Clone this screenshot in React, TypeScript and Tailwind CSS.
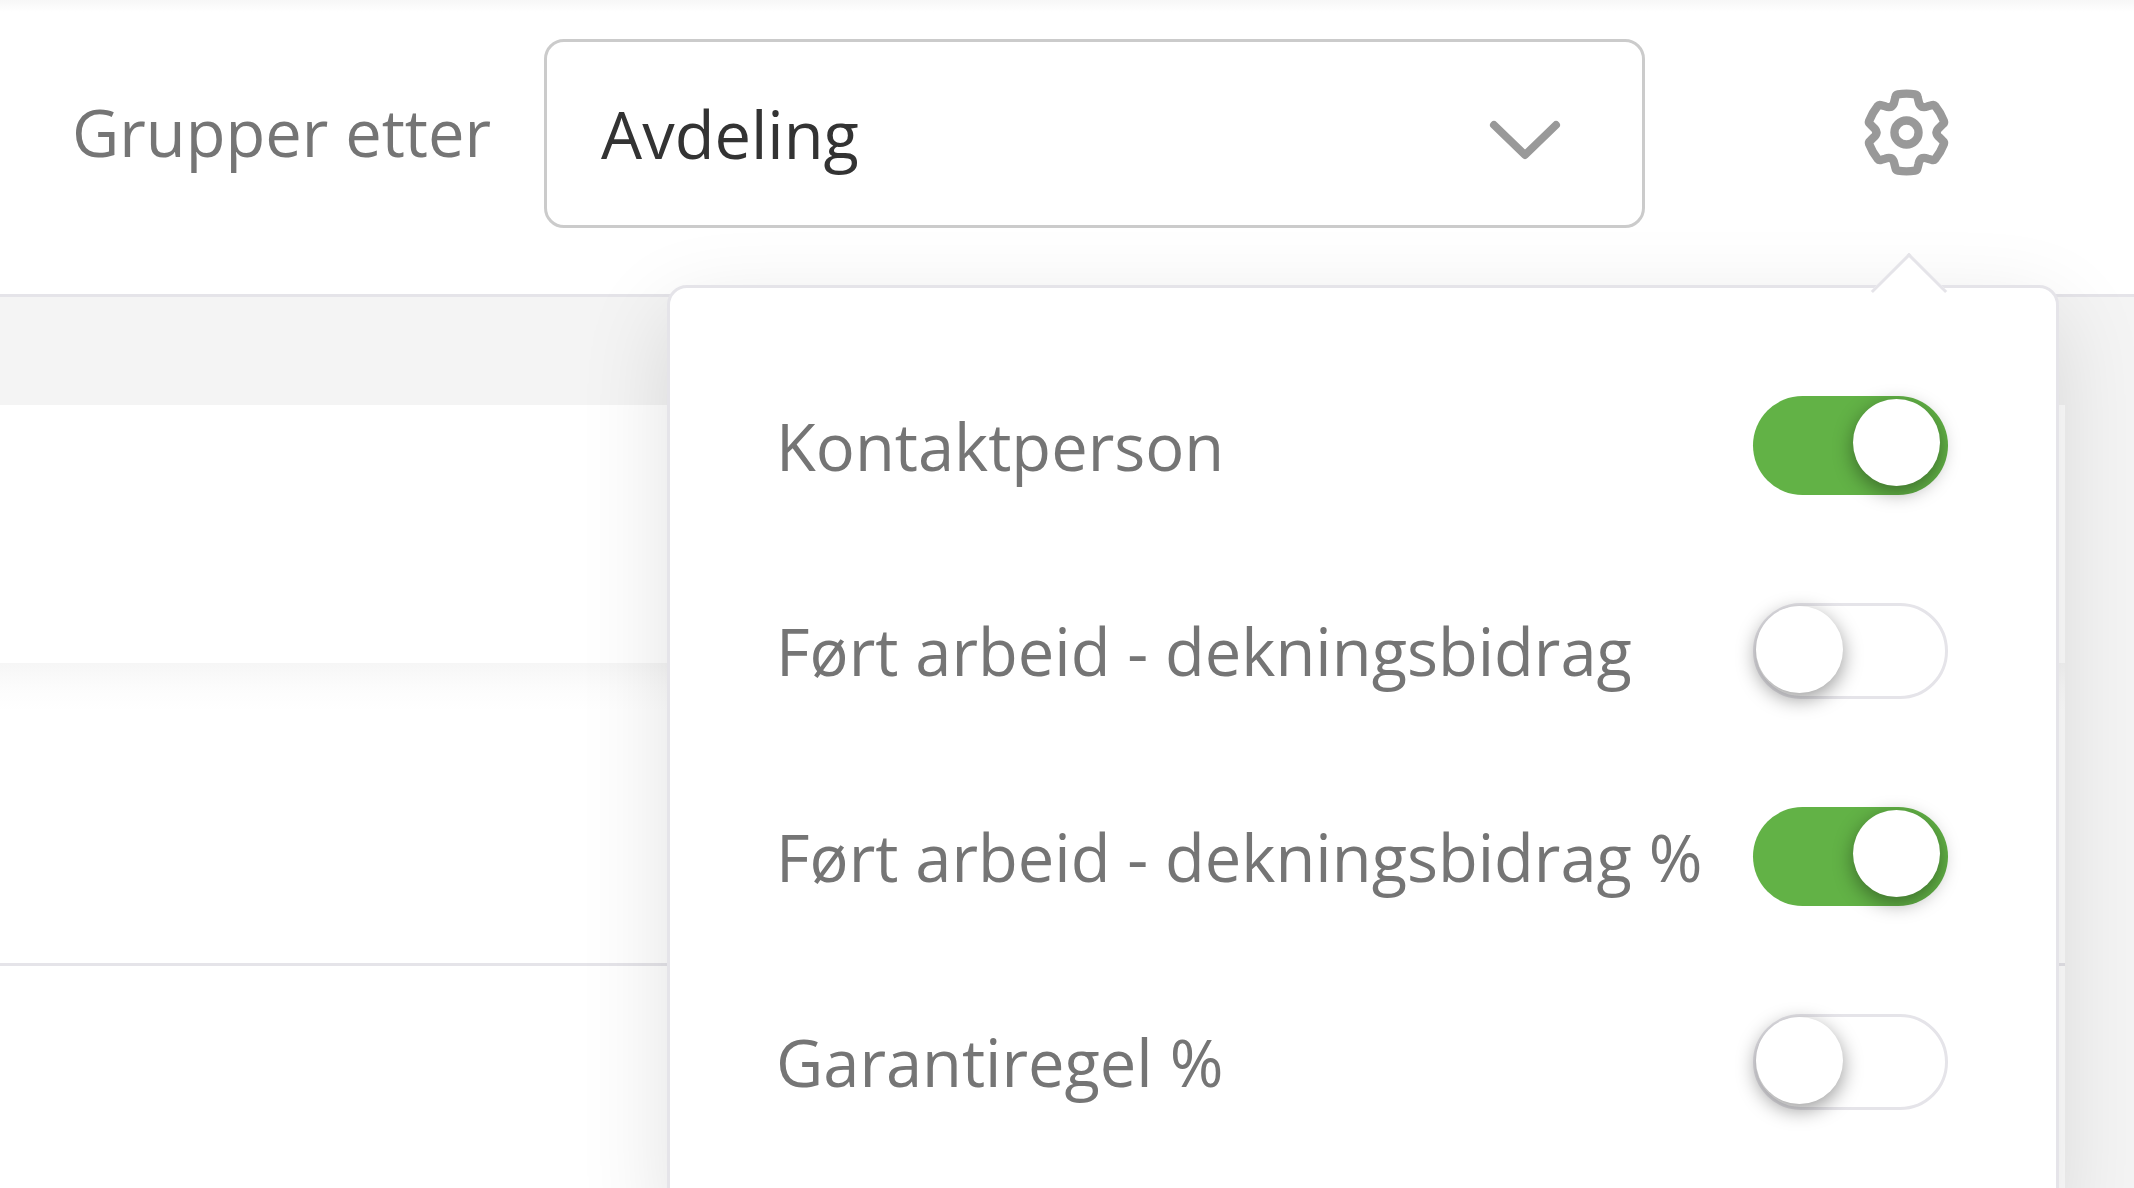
import { useState } from 'react';

const initialColumns = [
    { id: 'kontaktperson', label: 'Kontaktperson', visible: true },
    { id: 'bidrag', label: 'Ført arbeid - dekningsbidrag', visible: false },
    { id: 'bidrag-prosent', label: 'Ført arbeid - dekningsbidrag %', visible: true },
    { id: 'garantiregel', label: 'Garantiregel %', visible: false },
];

// One tooth of the cog, repeated every 60 degrees
const TOOTH =
    'M-45-78C-39-81-37-88-36-94L-33-106Q-32-113-26-114Q0-118 26-114Q32-113 33-106L36-94C37-88 39-81 45-78';

function GearIcon() {
    return (
        <svg
            viewBox="-130 -130 260 260"
            className="size-[87px]"
            fill="none"
            stroke="currentColor"
            strokeWidth="25"
            strokeLinecap="round"
            strokeLinejoin="round"
            aria-hidden="true">
            {[0, 60, 120, 180, 240, 300].map((angle) => (
                <path key={angle} d={TOOTH} transform={`rotate(${angle})`} />
            ))}
            <circle r="36" />
        </svg>
    );
}

function GroupSelect() {
    const [group, setGroup] = useState('avdeling');

    return (
        <div className="relative flex-1">
            <select
                id="group-by"
                value={group}
                onChange={(e) => setGroup(e.target.value)}
                className="h-[189px] w-full appearance-none rounded-[20px] border-3 border-[#cbcbcb] bg-transparent px-[54px] text-[#333] outline-none">
                <option value="avdeling">Avdeling</option>
                <option value="kunde">Kunde</option>
                <option value="prosjekt">Prosjekt</option>
            </select>
            <svg
                viewBox="0 0 72 40"
                className="pointer-events-none absolute top-[81px] right-[84px] h-10 w-[72px] text-[#999]"
                fill="none"
                stroke="currentColor"
                strokeWidth="8"
                strokeLinecap="round"
                strokeLinejoin="round"
                aria-hidden="true">
                <path d="M5 5L36 35L67 5" />
            </svg>
        </div>
    );
}

function Switch({
    id,
    checked,
    onChange,
}: {
    id: string;
    checked: boolean;
    onChange: () => void;
}) {
    return (
        <input
            id={id}
            type="checkbox"
            role="switch"
            checked={checked}
            onChange={onChange}
            className="relative h-24 w-[195px] shrink-0 cursor-pointer appearance-none rounded-full border-3 border-[#e5e4e9] bg-white before:absolute before:top-0 before:left-0 before:size-[87px] before:rounded-full before:bg-white before:shadow-[0_6px_20px_rgba(0,0,0,0.4)] checked:h-[99px] checked:border-0 checked:bg-[#62b246] checked:before:top-[3px] checked:before:right-2 checked:before:left-auto"
        />
    );
}

function ColumnSettings() {
    const [columns, setColumns] = useState(initialColumns);

    const toggle = (id: string) =>
        setColumns(
            columns.map((c) => (c.id === id ? { ...c, visible: !c.visible } : c))
        );

    return (
        <div className="absolute top-[285px] right-[75px] z-10 w-[1392px] rounded-[20px] border-3 border-[#e5e4e9] bg-white py-[108px] pr-[108px] pl-[106px] shadow-[0_27px_90px_rgba(0,0,0,0.12)]">
            <div className="absolute -top-[24px] right-[120px] size-[54px] rotate-45 border-t-3 border-l-3 border-[#e5e4e9] bg-white" />
            <div className="flex flex-col gap-[108px]">
                {columns.map(({ id, label, visible }) => (
                    <div key={id} className="flex items-center justify-between">
                        <label htmlFor={id} className="whitespace-nowrap">
                            {label}
                        </label>
                        <Switch
                            id={id}
                            checked={visible}
                            onChange={() => toggle(id)}
                        />
                    </div>
                ))}
            </div>
        </div>
    );
}

export default function App() {
    const [open, setOpen] = useState(true);

    return (
        <div className="relative flex h-screen flex-col overflow-hidden bg-[#f4f4f4] font-['Open_Sans',sans-serif] text-[65px] leading-[88px] text-[#757575]">
            <header className="flex items-center border-b-3 border-[#e5e4e9] bg-white bg-linear-to-b from-[#f7f7f7] to-white to-[12px] pt-[39px] pr-[184px] pb-[66px] pl-[72px]">
                <label htmlFor="group-by" className="mr-[53px] pb-1">
                    Grupper etter
                </label>
                <GroupSelect />
                <button
                    type="button"
                    aria-label="Innstillinger"
                    aria-expanded={open}
                    onClick={() => setOpen(!open)}
                    className="ml-[218px] cursor-pointer pb-0.5 text-[#999]">
                    <GearIcon />
                </button>
            </header>
            {open && <ColumnSettings />}
            <main className="mt-[108px] mr-[69px] flex flex-1 flex-col">
                <section className="h-[258px] bg-white" />
                <section className="h-[303px] border-b-3 border-[#e5e4e9] bg-linear-to-b from-[#f6f6f6] via-[#fcfcfc] via-[24px] to-white to-[48px]" />
                <section className="flex-1 bg-white" />
            </main>
        </div>
    );
}
